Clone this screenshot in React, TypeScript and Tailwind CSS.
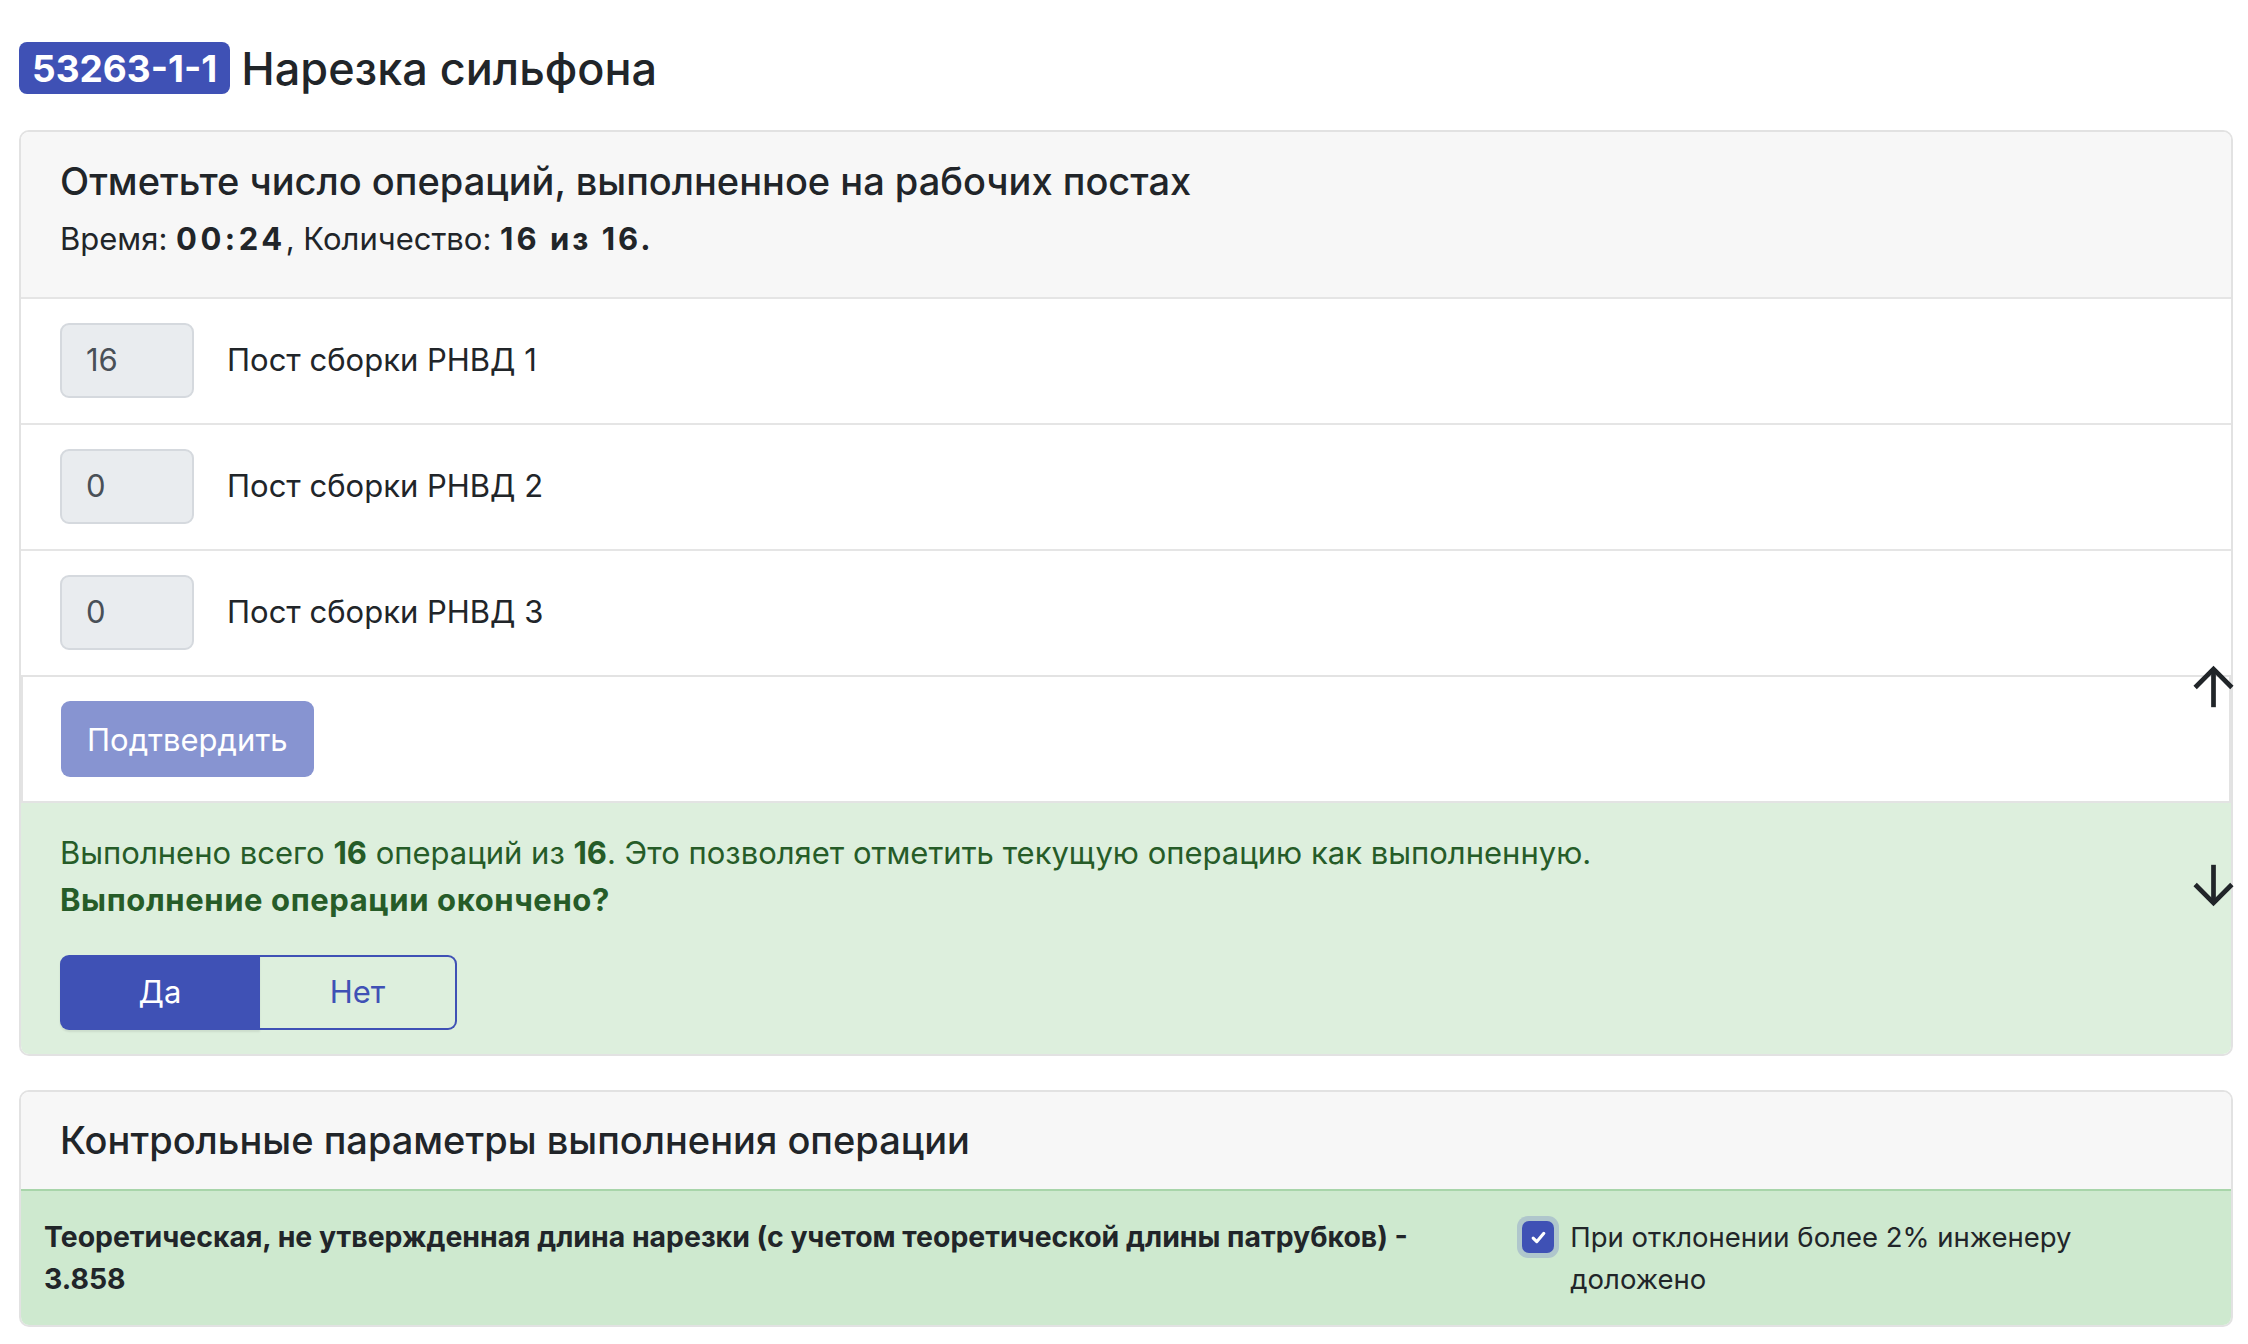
import React from "react";

function ArrowUp() {
  return (
    <svg width="63" height="63" viewBox="0 0 24 24" fill="none" stroke="#212529" strokeWidth="1.8" strokeLinecap="butt" strokeLinejoin="miter">
      <path d="M5 12l7-7 7 7" />
      <path d="M12 5v14.5" />
    </svg>
  );
}

function ArrowDown() {
  return (
    <svg width="63" height="63" viewBox="0 0 24 24" fill="none" stroke="#212529" strokeWidth="1.8" strokeLinecap="butt" strokeLinejoin="miter">
      <path d="M5 12l7 7 7-7" />
      <path d="M12 4.5V19" />
    </svg>
  );
}

function PostRow({ value, label }: { value: string; label: string }) {
  return (
    <div className="flex items-center border-t-2 border-[#e5e5e5] pt-[24px] pb-[25px] px-[39px] bg-white">
      <div className="w-[134px] h-[75px] rounded-[9px] border-2 border-[#d5d9de] bg-[#e9ecef] flex items-center pl-[24px] text-[31px] text-[#495057]">
        {value}
      </div>
      <div className="ml-[33px] text-[31px] text-[#212529]">{label}</div>
    </div>
  );
}

export default function App() {
  return (
    <div className="min-h-[1344px] bg-white pl-[19px] pr-[15px] pt-[42px] pb-[18px] font-['Inter',sans-serif] text-[#212529]">
      <div className="flex items-center gap-[11px] h-[52px]">
        <span className="inline-flex items-center h-[52px] px-[13px] rounded-[8px] bg-[#3f51b5] text-white text-[37px] font-bold leading-none">
          53263-1-1
        </span>
        <span className="text-[45px] leading-none font-medium">Нарезка сильфона</span>
      </div>

      <div className="relative mt-[36px] border-2 border-[#e2e2e2] rounded-[10px] overflow-visible">
        <div className="bg-[#f7f7f7] rounded-t-[8px] px-[39px] pt-[28px] pb-[37px]">
          <div className="text-[38px] leading-[43px] font-medium">
            Отметьте число операций, выполненное на рабочих постах
          </div>
          <div className="mt-[15px] text-[31px] leading-[42px]">
            Время: <b className="font-bold tracking-[3.5px]">00:24</b>, Количество: <b className="font-bold tracking-[3px]">16 из 16.</b>
          </div>
        </div>

        <PostRow value="16" label="Пост сборки РНВД 1" />
        <PostRow value="0" label="Пост сборки РНВД 2" />
        <PostRow value="0" label="Пост сборки РНВД 3" />

        <div className="border-2 border-[#e3e3e3] bg-white pt-[24px] pb-[24px] px-[38px]">
          <button className="h-[76px] px-[26px] rounded-[9px] bg-[#8794d1] text-white text-[31px] leading-none">
            Подтвердить
          </button>
        </div>

        <div className="bg-[#ddefdd] rounded-b-[8px] px-[39px] pt-[26px] pb-[24px] text-[#265c28]">
          <div className="text-[31px] leading-[47px]">
            Выполнено всего <b className="font-bold">16</b> операций из <b className="font-bold">16</b>. Это позволяет отметить текущую операцию как выполненную.
          </div>
          <div className="text-[31px] leading-[47px] font-bold tracking-[0.6px]">Выполнение операции окончено?</div>
          <div className="mt-[32px] flex w-[397px] h-[75px]">
            <button className="w-[200px] h-full rounded-l-[9px] bg-[#3f51b5] text-white text-[31px] shadow-[0_2px_2px_rgba(0,0,0,0.08)]">
              Да
            </button>
            <button className="w-[197px] h-full rounded-r-[9px] border-2 border-l-0 border-[#3f51b5] text-[#3f51b5] text-[31px]">
              Нет
            </button>
          </div>
        </div>

        <div className="absolute right-[-14px] top-[524px]">
          <ArrowUp />
        </div>
        <div className="absolute right-[-14px] top-[721px]">
          <ArrowDown />
        </div>
      </div>

      <div className="mt-[34px] border-2 border-[#e2e2e2] rounded-[10px] overflow-hidden">
        <div className="bg-[#f7f7f7] border-b-2 border-[#a8d5aa] px-[39px] pt-[27px] pb-[27px] text-[38px] leading-[43px] font-medium">
          Контрольные параметры выполнения операции
        </div>
        <div className="bg-[#cee9cf] grid grid-cols-3 pt-[25px] pb-[25px]">
          <div className="col-span-2 px-[23px] text-[28.4px] leading-[42px] font-bold">
            Теоретическая, не утвержденная длина нарезки (с учетом теоретической длины патрубков) - 3.858
          </div>
          <div className="col-span-1 px-[23px] flex items-start">
            <div className="mt-[0px] shrink-0 w-[42px] h-[42px] rounded-[11px] bg-[#afc6cc] flex items-center justify-center">
              <div className="w-[32px] h-[32px] rounded-[7px] bg-[#3f51b5] flex items-center justify-center">
                <svg width="19" height="19" viewBox="0 0 16 16" fill="none" stroke="white" strokeWidth="2.6" strokeLinecap="round" strokeLinejoin="round">
                  <path d="M3.5 8.5l3 3 6-7" />
                </svg>
              </div>
            </div>
            <div className="ml-[11px] text-[27.5px] leading-[42px]">
              При отклонении более 2% инженеру доложено
            </div>
          </div>
        </div>
      </div>
    </div>
  );
}
